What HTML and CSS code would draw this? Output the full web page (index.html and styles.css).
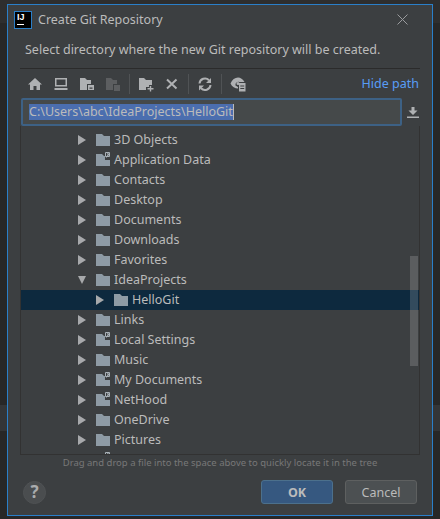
FILE: index.html

```html
<!DOCTYPE html>
<html lang="en">
<head>
  <meta charset="UTF-8" />
  <meta name="viewport" content="width=device-width, initial-scale=1.0"/>
  <title>Create Git Repository</title>
  <link rel="stylesheet" href="styles.css">
</head>
<body>
  <svg class="defs" width="0" height="0">
    <symbol id="folder" viewBox="0 0 14 12">
      <path d="M0 0H6L8 2H14V12H0Z"/>
    </symbol>
    <symbol id="folder-link" viewBox="0 0 14 14">
      <path d="M0 2H6L8 4H9V8H14V14H0Z"/>
      <path d="M9.5 .5H13.5V4.5H9.5Z" fill="none" stroke="#a9b2b8"/>
      <path d="M10.5 5.5L12.5 2M11 1.8H12.7V3.5" fill="none" stroke="#a9b2b8"/>
    </symbol>
  </svg>

  <div class="dialog">
    <div class="titlebar">
      <div class="logo"><span class="logo-text">IJ</span><span class="logo-bar"></span></div>
      <span class="title">Create Git Repository</span>
      <svg class="close" width="11" height="11" viewBox="0 0 11 11"><path d="M.5 .5L10.5 10.5M10.5 .5L.5 10.5"/></svg>
    </div>

    <p class="desc">Select directory where the new Git repository will be created.</p>

    <div class="toolbar">
      <button class="tool"><svg width="16" height="16" viewBox="0 0 16 16"><path d="M8 2L15 8.500H13V14H9.500V10H6.500V14H3V8.500H1Z"/></svg></button>
      <button class="tool"><svg width="16" height="16" viewBox="0 0 16 16"><path fill-rule="evenodd" d="M2 2H14V10.500H2ZM3.500 3.500V9H12.500V3.500ZM1.500 12H14.500V14H1.500Z"/></svg></button>
      <button class="tool"><svg width="16" height="16" viewBox="0 0 16 16"><path d="M1 2H6L8 4H12V8H8V14H1Z"/><path fill-rule="evenodd" d="M9 9H15V14H9ZM10.500 11.500V12.800H13.500V11.500Z"/></svg></button>
      <button class="tool off"><svg width="16" height="16" viewBox="0 0 16 16"><path d="M1 2H6L8 4H12V8H8V14H1Z"/><path d="M9 9H15V15H9Z"/></svg></button>
      <span class="tool-sep"></span>
      <button class="tool"><svg width="16" height="16" viewBox="0 0 16 16"><path d="M1 2H6L8 4H14V9H11V11H8V14H1Z"/><path d="M11.800 10H13.200V12H15.500V13.400H13.200V15.500H11.800V13.400H9.500V12H11.800Z"/></svg></button>
      <button class="tool"><svg width="16" height="16" viewBox="0 0 16 16"><path d="M3 3.500L12.500 12.500M12.500 3.500L3 12.500" fill="none" stroke="#afb1b3" stroke-width="2"/></svg></button>
      <span class="tool-sep"></span>
      <button class="tool"><svg width="16" height="16" viewBox="0 0 16 16"><path d="M2.500 7.500A5.500 5.500 0 0 1 12 4.200M13.500 9A5.500 5.500 0 0 1 4 12.300" fill="none" stroke="#afb1b3" stroke-width="2"/><path d="M14 2V7H9ZM2 14.500V9.500H7Z"/></svg></button>
      <span class="tool-sep"></span>
      <button class="tool"><svg width="16" height="16" viewBox="0 0 16 16"><path fill-rule="evenodd" d="M.5 7.500C2 3.500 5 1.500 8 1.500C10.500 1.500 12.800 3 14.500 6H9.500A3 3 0 0 0 5.500 9.500L8 11V12.500C5 12.500 2 11 .5 7.500ZM6.500 7.500A1.500 1.500 0 1 0 8 6A1.500 1.500 0 0 0 6.500 7.500Z"/><path fill-rule="evenodd" d="M9 7H15.500V15.500H9ZM10.300 9.500V10.500H14.200V9.500ZM10.300 12V13H14.200V12Z"/></svg></button>
      <a class="hide-path">Hide path</a>
    </div>

    <div class="path-row">
      <div class="path-input"><span class="path-sel">C:\Users\abc\IdeaProjects\HelloGit</span></div>
      <svg class="path-dl" width="12" height="11" viewBox="0 0 12 11"><path d="M4.500 0H7.500V3.500H10.500L6 8L1.500 3.500H4.500ZM0 9.500H12V11H0Z"/></svg>
    </div>

    <div class="tree">
      <div class="row"><span class="arrow"></span><svg class="fld"><use href="#folder"/></svg><span class="name">3D Objects</span></div>
      <div class="row"><span class="arrow"></span><svg class="fld lnk"><use href="#folder-link"/></svg><span class="name">Application Data</span></div>
      <div class="row"><span class="arrow"></span><svg class="fld"><use href="#folder"/></svg><span class="name">Contacts</span></div>
      <div class="row"><span class="arrow"></span><svg class="fld"><use href="#folder"/></svg><span class="name">Desktop</span></div>
      <div class="row"><span class="arrow"></span><svg class="fld"><use href="#folder"/></svg><span class="name">Documents</span></div>
      <div class="row"><span class="arrow"></span><svg class="fld"><use href="#folder"/></svg><span class="name">Downloads</span></div>
      <div class="row"><span class="arrow"></span><svg class="fld"><use href="#folder"/></svg><span class="name">Favorites</span></div>
      <div class="row"><span class="arrow open"></span><svg class="fld"><use href="#folder"/></svg><span class="name">IdeaProjects</span></div>
      <div class="row child selected"><span class="arrow"></span><svg class="fld"><use href="#folder"/></svg><span class="name">HelloGit</span></div>
      <div class="row"><span class="arrow"></span><svg class="fld"><use href="#folder"/></svg><span class="name">Links</span></div>
      <div class="row"><span class="arrow"></span><svg class="fld lnk"><use href="#folder-link"/></svg><span class="name">Local Settings</span></div>
      <div class="row"><span class="arrow"></span><svg class="fld"><use href="#folder"/></svg><span class="name">Music</span></div>
      <div class="row"><span class="arrow"></span><svg class="fld lnk"><use href="#folder-link"/></svg><span class="name">My Documents</span></div>
      <div class="row"><span class="arrow"></span><svg class="fld lnk"><use href="#folder-link"/></svg><span class="name">NetHood</span></div>
      <div class="row"><span class="arrow"></span><svg class="fld"><use href="#folder"/></svg><span class="name">OneDrive</span></div>
      <div class="row"><span class="arrow"></span><svg class="fld"><use href="#folder"/></svg><span class="name">Pictures</span></div>
      <div class="row"><span class="arrow"></span><svg class="fld lnk"><use href="#folder-link"/></svg></div>
      <div class="scrollbar"></div>
    </div>

    <p class="hint">Drag and drop a file into the space above to quickly locate it in the tree</p>

    <div class="footer">
      <button class="help">?</button>
      <button class="btn primary">OK</button>
      <button class="btn">Cancel</button>
    </div>
  </div>
</body>
</html>
```

FILE: styles.css

```css
* {
  box-sizing: border-box;
}
html, body {
  height: 100%;
}
body {
  margin: 0;
  padding: 4px 7px 3px;
  background: linear-gradient(#2e2e2e 23px, #272727 23px, #272727 405px, #333537 405px, #333537 431px, #272727 431px);
  font-family: "Noto Sans", Arial, sans-serif;
  font-size: 12.5px;
  color: #bbbbbb;
  overflow: hidden;
}
.defs {
  position: absolute;
}
button {
  font-family: inherit;
}
.dialog {
  width: 426px;
  height: 512px;
  background: #3c3f41;
  border: 1px solid #2a7fc9;
  padding: 0 12px 0 12px;
}
.titlebar {
  display: flex;
  align-items: center;
  height: 29px;
  margin-left: -5px;
}
.logo {
  width: 16px;
  height: 16px;
  background: #000;
  outline: 1px solid #2a7fc9;
  display: flex;
  flex-direction: column;
  padding: 1px 0 0 2px;
  color: #fff;
  flex: none;
}
.logo-text {
  font: bold 9px/9px "Liberation Sans", sans-serif;
}
.logo-bar {
  width: 7px;
  height: 1px;
  margin-top: 2px;
  background: #fff;
}
.title {
  margin-left: 7px;
  flex: 1;
}
.close {
  margin-right: 12px;
}
.close path {
  stroke: #9a9c9e;
  fill: none;
}
.desc {
  margin: 0;
  padding: 7px 0 0 5px;
  height: 34px;
  line-height: 18px;
  white-space: nowrap;
}
.toolbar {
  display: flex;
  align-items: center;
  height: 30px;
  border-top: 1px solid #2b2b2b;
  padding: 0 1px 0 2px;
  width: 400px;
}
.tool {
  width: 26px;
  height: 26px;
  padding: 0;
  border: 0;
  background: none;
  display: flex;
  align-items: center;
  justify-content: center;
}
.tool svg {
  fill: #afb1b3;
}
.tool.off svg {
  fill: #5c5e60;
}
.tool-sep {
  width: 1px;
  height: 20px;
  margin: 0 3px;
  background: #505355;
}
.hide-path {
  margin-left: auto;
  color: #589df6;
}
.path-row {
  display: flex;
  align-items: center;
  height: 28px;
  width: 402px;
}
.path-input {
  width: 381px;
  height: 28px;
  margin-left: 1px;
  background: #45494a;
  border: 2px solid #3d6185;
  border-radius: 2px;
  padding: 4px 0 0 6px;
  line-height: 16px;
}
.path-sel {
  display: inline-block;
  background: #4b6eaf;
  color: #bbbbbb;
  height: 16px;
  border-right: 1px solid #bbbbbb;
}
.path-dl {
  margin-left: 5px;
  fill: #afb1b3;
}
.tree {
  position: relative;
  width: 400px;
  height: 329px;
  padding-top: 4px;
  border: 1px solid #323232;
  border-top: 0;
  overflow: hidden;
}
.row {
  display: flex;
  align-items: center;
  height: 20px;
  padding-left: 57px;
}
.row.child {
  padding-left: 75px;
}
.row.selected {
  background: #0d293e;
}
.name {
  margin-top: -2px;
}
.arrow {
  width: 0;
  height: 0;
  margin-right: 10px;
  border-style: solid;
  border-width: 5px 0 5px 8px;
  border-color: transparent transparent transparent #a7a9ab;
}
.arrow.open {
  border-width: 8px 4px 0 4px;
  border-color: #a7a9ab transparent transparent transparent;
}
.fld {
  width: 14px;
  height: 12px;
  margin-right: 4px;
  fill: #8e9ba5;
}
.fld.lnk {
  height: 14px;
  margin-top: -2px;
}
.scrollbar {
  position: absolute;
  right: 1px;
  top: 130px;
  width: 8px;
  height: 110px;
  background: rgba(255, 255, 255, 0.16);
}
.hint {
  margin: 0;
  width: 400px;
  height: 17px;
  line-height: 16px;
  font-size: 9.5px;
  text-align: center;
  color: #787878;
}
.footer {
  display: flex;
  align-items: center;
  height: 24px;
  margin-top: 8px;
  width: 397px;
}
.help {
  width: 23px;
  height: 23px;
  margin-left: 3px;
  padding: 0;
  border: 1px solid #4f5254;
  border-radius: 50%;
  background: #4a4d4f;
  color: #a9abad;
  font-size: 17px;
  font-weight: bold;
  line-height: 20px;
}
.btn {
  width: 72px;
  height: 24px;
  margin-left: 12px;
  padding: 0;
  background: #4c5052;
  border: 1px solid #5e6060;
  border-radius: 3px;
  color: #bbbbbb;
  font-size: 12.5px;
}
.btn.primary {
  margin-left: auto;
  background: #365880;
  border-color: #4c708c;
  font-weight: bold;
}
```
